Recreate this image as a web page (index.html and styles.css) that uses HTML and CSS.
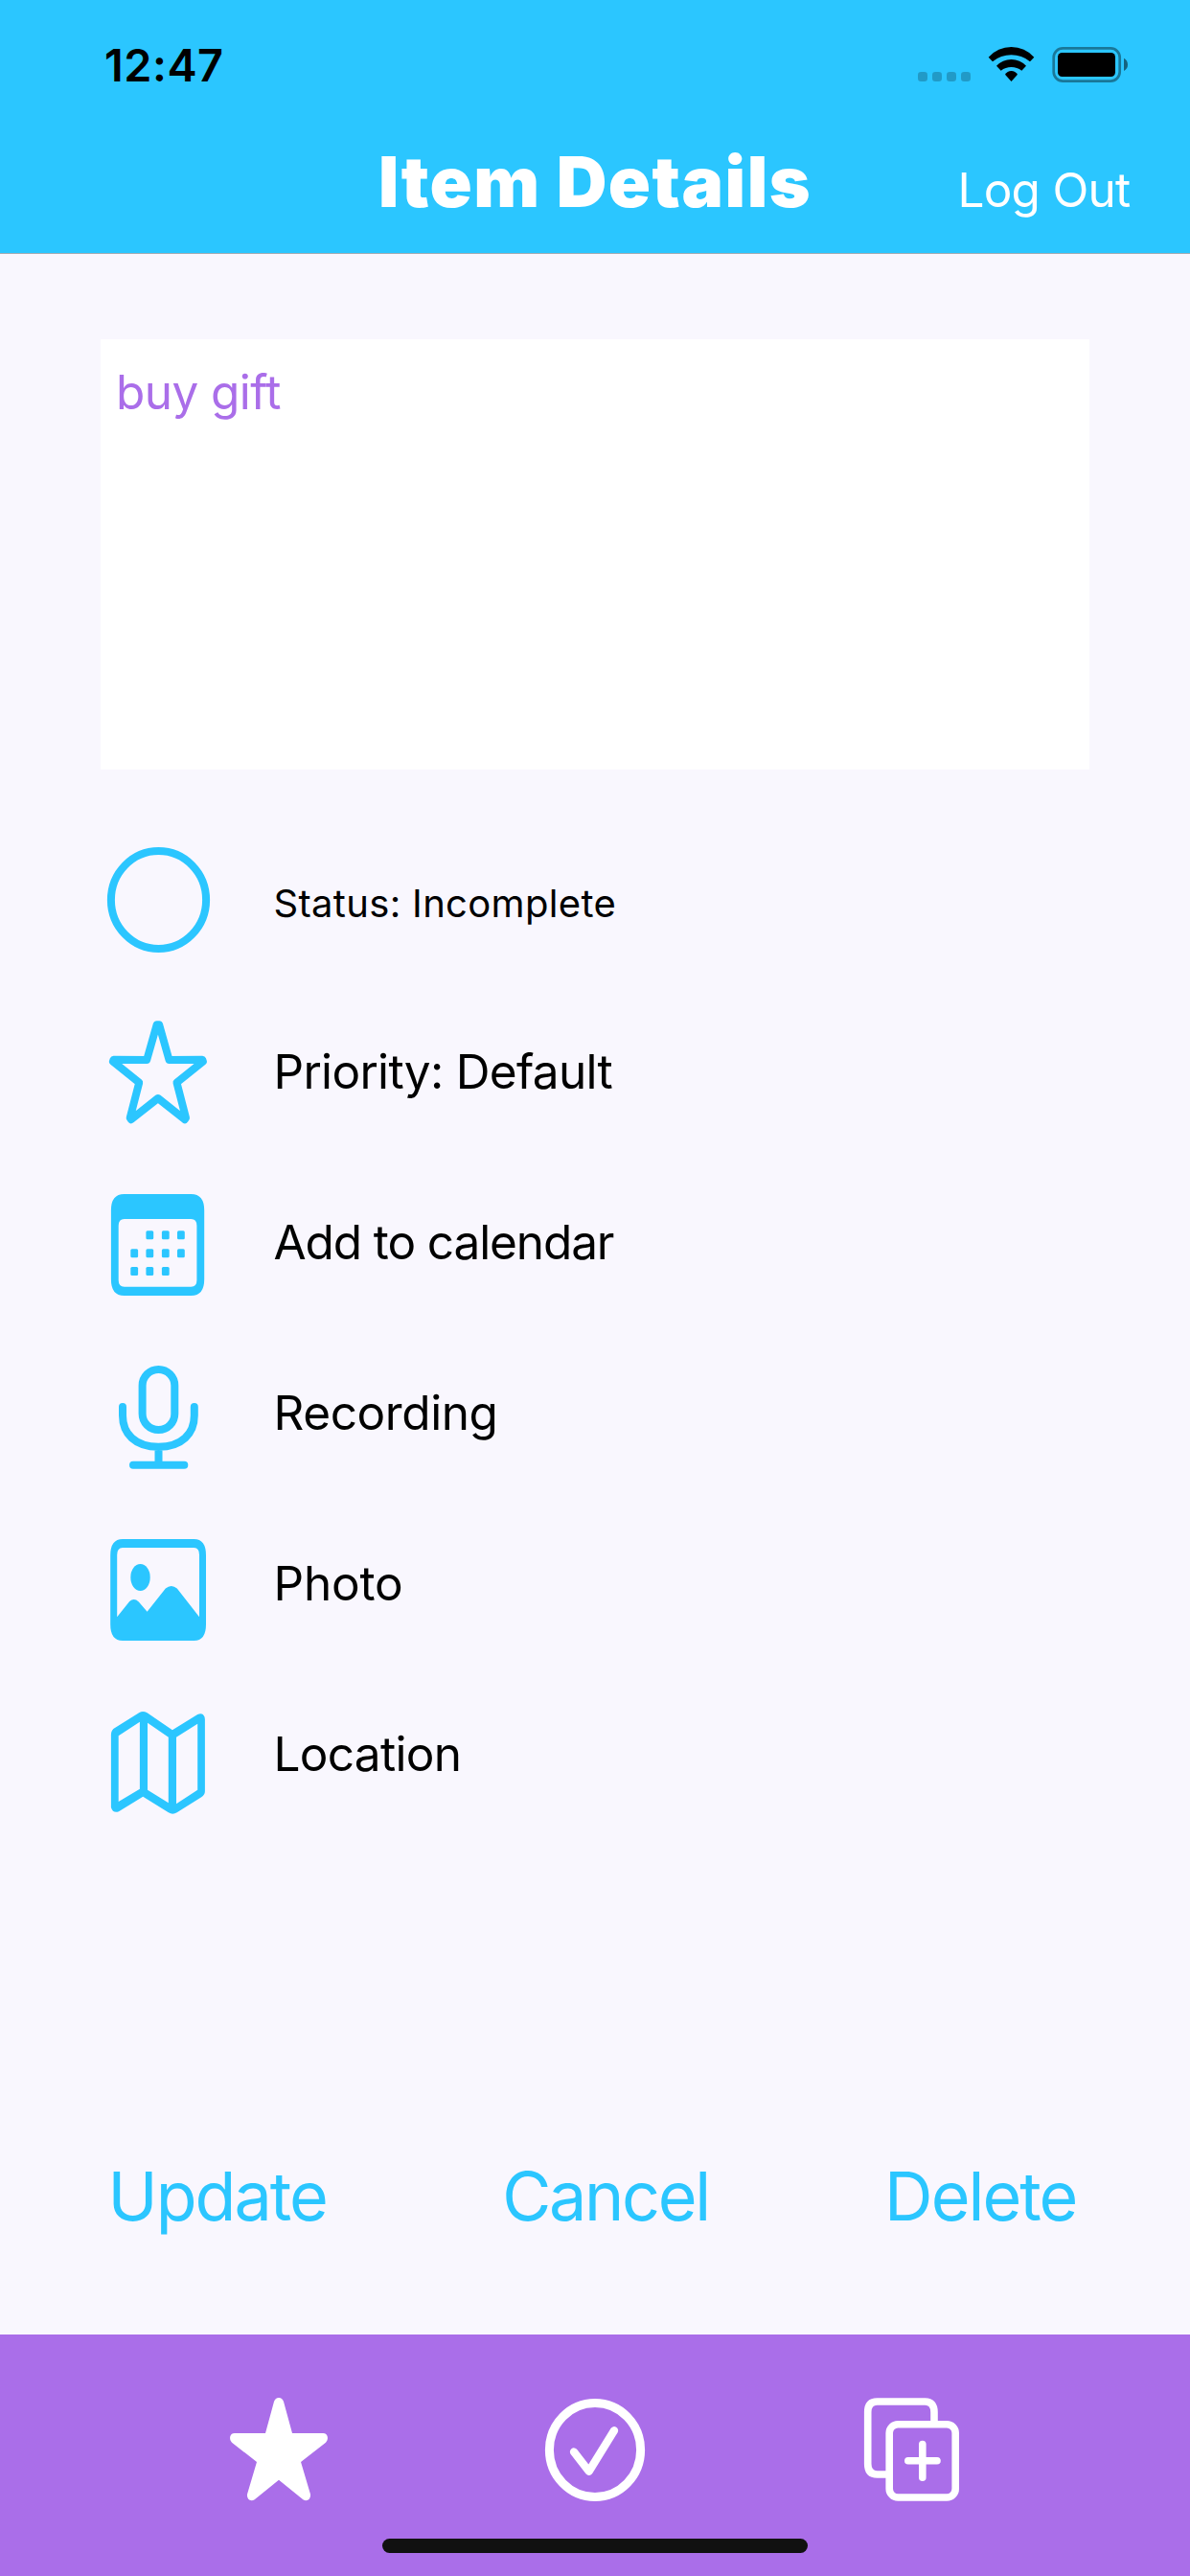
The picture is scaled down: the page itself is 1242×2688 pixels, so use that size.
FILE: index.html
```
<!DOCTYPE html>
<html lang="en">
<head>
<meta charset="utf-8">
<title>Item Details</title>
<link rel="stylesheet" href="styles.css">
</head>
<body>
<div class="screen">
  <header class="header">
    <div class="status-bar">
      <span class="time">12:47</span>
      <svg class="status-icons" viewBox="0 0 230 132" aria-hidden="true">
        <g fill-opacity=".22">
          <rect x="8" y="75" width="10" height="10" rx="3.3"/>
          <rect x="23" y="75" width="10" height="10" rx="3.3"/>
          <rect x="38" y="75" width="10" height="10" rx="3.3"/>
          <rect x="53" y="75" width="10" height="10" rx="3.3"/>
        </g>
        <path d="M81.7 59.7A31.8 31.8 0 0 1 129.3 59.7L125 64.3A30.7 30.7 0 0 0 86 64.3Z"/>
        <path d="M90 68.7A21.3 21.3 0 0 1 121 68.7L116.300 73.7A17.6 17.6 0 0 0 94.700 73.700Z"/>
        <path d="M99 77.700A7.600 7.600 0 0 1 112 77.700L105.500 85Z"/>
        <rect x="149.700" y="50.400" width="69" height="34.200" rx="9.500" fill="none" stroke="#000" stroke-opacity=".4" stroke-width="2.700"/>
        <rect x="154" y="55" width="60" height="25" rx="4.500"/>
        <path d="M223 60.700Q227 63 227 67.400Q227 71.800 223 74Z" fill-opacity=".5"/>
      </svg>
    </div>
    <nav class="nav">
      <h1 class="title">Item Details</h1>
      <a class="logout">Log Out</a>
    </nav>
  </header>

  <main class="content">
    <div class="note">buy gift</div>

    <section class="details">
      <div class="icons">
        <svg class="icon" viewBox="0 0 110 110"><ellipse cx="55.500" cy="55" rx="49.600" ry="51" class="line"/></svg>
        <svg class="icon" viewBox="0 0 110 110"><path class="line" d="M53.700 5.200H56.100L66.500 42L101.200 41.800L101.900 43.600L74.500 65.700L84 102.500L82.800 104.200L54.900 82L26.900 104.200L25.700 102.500L35.200 65.700L7.900 43.600L8.600 41.800L43.200 42Z"/></svg>
        <svg class="icon" viewBox="0 0 110 110">
          <path class="fill" fill-rule="evenodd" d="M19.500 2H89.500Q103.200 2 103.200 19V91Q103.200 108 89.500 108H19.500Q5.900 108 5.900 91V19Q5.900 2 19.500 2ZM19.700 28Q13.700 28 13.700 35V91.700Q13.700 98.700 19.700 98.700H89.400Q95.400 98.700 95.400 91.700V35Q95.400 28 89.400 28Z"/>
          <g class="fill">
            <rect x="42.400" y="40.200" width="7.800" height="9" rx="1.500"/><rect x="58.900" y="40.200" width="7.800" height="9" rx="1.500"/><rect x="75" y="40.200" width="7.800" height="9" rx="1.500"/>
            <rect x="26.300" y="59.200" width="7.800" height="9" rx="1.500"/><rect x="42.400" y="59.200" width="7.800" height="9" rx="1.500"/><rect x="58.900" y="59.200" width="7.800" height="9" rx="1.500"/><rect x="75" y="59.200" width="7.800" height="9" rx="1.500"/>
            <rect x="26.300" y="78" width="7.800" height="9" rx="1.500"/><rect x="42.400" y="78" width="7.800" height="9" rx="1.500"/><rect x="58.900" y="78" width="7.800" height="9" rx="1.500"/>
          </g>
        </svg>
        <svg class="icon" viewBox="0 0 110 110">
          <rect class="line" x="38.600" y="5" width="33.700" height="63" rx="16.800"/>
          <path class="line" d="M18 44V53C18 72 31 85.800 55.400 85.800S92.800 72 92.800 53V44M55.500 86V104M29 104.800H82.300"/>
        </svg>
        <svg class="icon" viewBox="0 0 110 110">
          <path class="fill" fill-rule="evenodd" d="M18 2H92.500Q105 2 105 19V91Q105 108 92.500 108H18Q5.200 108 5.200 91V19Q5.200 2 18 2ZM18 11Q12.200 11 12.200 18.500V83.300L25.200 67Q29.900 63 34.800 67.500L43.600 77.700L62.800 53.500Q68.800 48.500 74.800 53.500L98 83.300V18.500Q98 11 92.500 11Z"/>
          <ellipse class="fill" cx="36.500" cy="42" rx="10.200" ry="14"/>
        </svg>
        <svg class="icon" viewBox="0 0 110 110">
          <path class="fill" fill-rule="evenodd" d="M5.900 26Q5.900 21 10.300 18.700L35.500 3Q39.200 .8 43.600 3.300L69.900 21.200L96.200 5Q101.500 2.500 103.500 7.500L103.900 10V85.300Q103.900 89 100.200 91.300L74.700 107.300Q70.200 110 65.800 107.300L39.200 90.700L14 106.200Q8 108.600 5.900 102ZM13.700 27.300V96L35.900 82.700V12.700ZM44 13.700V83.700L65.800 97.300V28.700ZM74 28.700V98.300L96.200 83.700V14.700Z"/>
        </svg>
      </div>
      <div class="labels">
        <span class="label label-status">Status: Incomplete</span>
        <span class="label">Priority: Default</span>
        <span class="label label-calendar">Add to calendar</span>
        <span class="label label-recording">Recording</span>
        <span class="label label-photo">Photo</span>
        <span class="label">Location</span>
      </div>
    </section>

    <div class="actions">
      <a class="action">Update</a>
      <a class="action action-cancel">Cancel</a>
      <a class="action">Delete</a>
    </div>
  </main>

  <footer class="tab-bar">
    <svg class="tab" viewBox="0 0 110 110"><path fill="#fff" d="M50 5Q51.500 1 55 1T60 5L69 38H101.300C106 38 107.500 44 104 47.700L78 68L88 101.700C88.500 107 84.500 110 80.300 107.300L55 86.700L29.700 107.300C25.500 110 21.500 107 22 101.700L32 68L6 47.700C2.500 44 4 38 8.700 38H41Z"/></svg>
    <svg class="tab" viewBox="0 0 110 110"><g fill="none" stroke="#fff" stroke-linecap="round" stroke-linejoin="round"><ellipse cx="55" cy="55.500" rx="47.600" ry="49" stroke-width="9"/><path d="M33 57.500L48.700 77.800L75 35.200" stroke-width="8.300"/></g></svg>
    <svg class="tab" viewBox="0 0 110 110"><g fill="none" stroke="#fff" stroke-width="7.600" stroke-linecap="round"><path stroke-linecap="butt" d="M79 27V16Q79 5 69.500 5H19.500Q9.700 5 9.700 16V70Q9.700 81 19.500 81H30"/><rect x="32.200" y="28.700" width="69" height="76.300" rx="9"/><path d="M66.800 49.500V84.200M51.800 66.700H82"/></g></svg>
    <div class="home-indicator"></div>
  </footer>
</div>
</body>
</html>
```

FILE: styles.css
```
* { box-sizing: border-box; }

body {
  margin: 0;
  font-family: Inter, "Liberation Sans", sans-serif;
  font-size: 49.5px;
  color: #000;
}

.screen {
  display: flex;
  flex-direction: column;
  width: 1242px;
  height: 2688px;
  overflow: hidden;
  background: #f9f7fe;
}

.header {
  height: 265px;
  background: #2bc6ff;
  border-bottom: 1px solid #a3abb3;
}

.status-bar {
  display: flex;
  justify-content: space-between;
  height: 132px;
  padding: 0 62px 0 109px;
}

.time {
  padding-top: 4px;
  font-size: 46.8px;
  font-weight: 600;
  line-height: 128px;
  letter-spacing: .52px;
}

.status-icons {
  width: 230px;
  height: 132px;
  margin-right: 0;
}

.nav {
  display: grid;
  grid-template-columns: 1fr auto 1fr;
  align-items: baseline;
  height: 132px;
  padding: 0 62.500px;
  color: #fff;
}

.title {
  grid-column: 2;
  margin: 0;
  font-size: 73px;
  font-weight: 900;
  line-height: 115px;
  letter-spacing: 1.46px;
}

.logout {
  text-align: right;
  letter-spacing: -.74px;
}

.content {
  display: flex;
  flex-direction: column;
  flex: 1;
}

.note {
  height: 449px;
  margin: 89px 105px 0;
  padding: 25px 16px;
  background: #fff;
  color: #aa6ee9;
  line-height: 60px;
  letter-spacing: -.57px;
}

.details {
  display: flex;
  gap: 65.500px;
  margin: 48px 0 0 110px;
}

.icons {
  display: flex;
  flex-direction: column;
  gap: 70px;
  padding-top: 33px;
}

.icon {
  display: block;
  width: 110px;
  height: 110px;
}

.fill { fill: #2bc6ff; }

.line {
  fill: none;
  stroke: #2bc6ff;
  stroke-width: 8px;
  stroke-linecap: round;
  stroke-linejoin: round;
}

.labels {
  display: flex;
  flex-direction: column;
}

.label {
  height: 178px;
  line-height: 178px;
  letter-spacing: -.7px;
  white-space: nowrap;
}

.label-status {
  padding-top: 3px;
  font-size: 40px;
  letter-spacing: .32px;
}

.label-calendar { letter-spacing: -1.1px; }
.label-recording { letter-spacing: -.4px; }
.label-photo { letter-spacing: -.22px; }

.actions {
  display: flex;
  justify-content: space-between;
  margin-top: auto;
  padding: 0 118.500px 95px 112.500px;
}

.action {
  color: #2bc6ff;
  font-size: 70px;
  line-height: 99px;
  letter-spacing: -1.95px;
}

.action-cancel { letter-spacing: -2.32px; }

.tab-bar {
  position: relative;
  display: flex;
  justify-content: center;
  gap: 220px;
  height: 252px;
  padding-top: 65px;
  background: #aa6ee9;
}

.tab {
  width: 110px;
  height: 110px;
}

.home-indicator {
  position: absolute;
  left: 399px;
  bottom: 24px;
  width: 444px;
  height: 15px;
  border-radius: 8px;
  background: #111;
}
```
